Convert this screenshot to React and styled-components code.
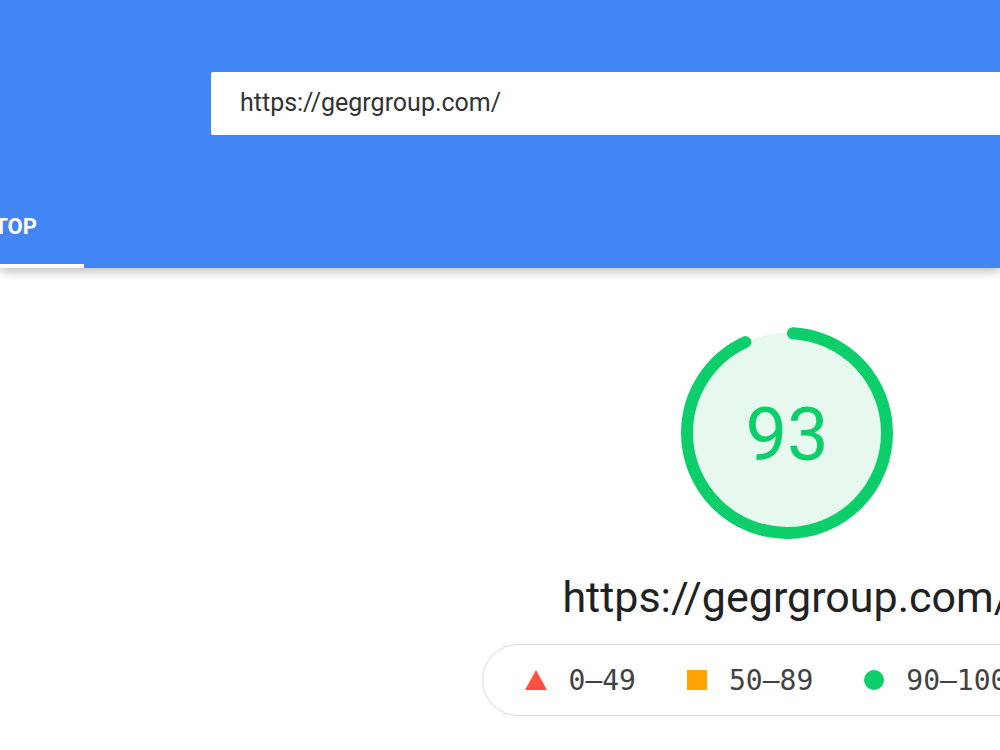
import React from 'react';
import styled, { createGlobalStyle } from 'styled-components';

const GlobalStyle = createGlobalStyle`
    html, body {
        margin: 0;
        padding: 0;
        background: #fff;
        overflow: hidden;
        width: 1000px;
        height: 750px;
        font-family: Roboto, "Liberation Sans", Arial, sans-serif;
    }
`;

const Page = styled.div`
    width: 1000px;
    height: 750px;
    overflow: hidden;
    position: relative;
`;

const Header = styled.header`
    background: #4285f4;
    height: 268px;
    display: flex;
    flex-direction: column;
    box-shadow: 0 3px 10px rgba(0, 0, 0, 0.28);
    position: relative;
    z-index: 1;
`;

const SearchRow = styled.div`
    display: flex;
    padding: 72px 0 0 211px;
`;

const UrlInput = styled.div`
    flex: 0 0 900px;
    height: 63px;
    background: #fff;
    border-radius: 2px;
    box-sizing: border-box;
    padding-left: 29px;
    padding-bottom: 2px;
    display: flex;
    align-items: center;
    font-size: 25px;
    color: #333;
`;

const Tabs = styled.nav`
    margin-top: auto;
    display: flex;
    margin-left: -100px;
`;

const Tab = styled.div`
    padding: 0 47px 0 40px;
    height: 72px;
    box-sizing: border-box;
    display: flex;
    align-items: center;
    padding-bottom: 8px;
    font-size: 22px;
    font-weight: 700;
    color: #fff;
    border-bottom: 4px solid ${p => (p.$active ? '#fff' : 'transparent')};
`;

const Main = styled.main`
    width: 800px;
    margin-left: 387px;
    display: flex;
    flex-direction: column;
    align-items: center;
    padding-top: 59px;
`;

const Gauge = styled.div`
    width: 212px;
    height: 212px;
    position: relative;
    display: flex;
    align-items: center;
    justify-content: center;
`;

const GaugeSvg = styled.svg`
    position: absolute;
    inset: 0;
    transform: rotate(-90deg);
`;

const Score = styled.span`
    position: relative;
    font-size: 74px;
    color: #0cce6b;
    margin-top: 2px;
`;

const FinalUrl = styled.div`
    margin-top: 33px;
    font-size: 43px;
    color: #212121;
    white-space: nowrap;
`;

const Legend = styled.div`
    margin-top: 22px;
    height: 72px;
    box-sizing: border-box;
    border: 1px solid #dadada;
    border-radius: 36px;
    padding: 0 84px 0 42px;
    display: flex;
    align-items: center;
    gap: 51px;
`;

const LegendItem = styled.div`
    display: flex;
    align-items: center;
    gap: 22px;
    font-family: "DejaVu Sans Mono", "Liberation Mono", monospace;
    font-size: 28px;
    color: #424242;
    white-space: nowrap;
`;

const Triangle = styled.span`
    width: 0;
    height: 0;
    border-left: 11px solid transparent;
    border-right: 11px solid transparent;
    border-bottom: 20px solid #ff4e42;
`;

const Square = styled.span`
    width: 20px;
    height: 20px;
    background: #ffa400;
`;

const Dot = styled.span`
    width: 20px;
    height: 20px;
    border-radius: 50%;
    background: #0cce6b;
`;

const score = 93;
const R = 100;
const C = 2 * Math.PI * R;

const App = () => (
    <Page>
        <GlobalStyle />
        <Header>
            <SearchRow>
                <UrlInput>https://gegrgroup.com/</UrlInput>
            </SearchRow>
            <Tabs>
                <Tab $active>DESKTOP</Tab>
            </Tabs>
        </Header>
        <Main>
            <Gauge>
                <GaugeSvg viewBox="0 0 212 212" width="212" height="212">
                    <circle cx="106" cy="106" r={R} fill="#e7f9ef" />
                    <circle
                        cx="106"
                        cy="106"
                        r={R}
                        fill="none"
                        stroke="#0cce6b"
                        strokeWidth="12"
                        strokeLinecap="round"
                        strokeDasharray={`${(score / 100) * C - 6} ${C}`}
                        strokeDashoffset="-6"
                    />
                </GaugeSvg>
                <Score>{score}</Score>
            </Gauge>
            <FinalUrl>https://gegrgroup.com/</FinalUrl>
            <Legend>
                <LegendItem><Triangle />0–49</LegendItem>
                <LegendItem><Square />50–89</LegendItem>
                <LegendItem><Dot />90–100</LegendItem>
            </Legend>
        </Main>
    </Page>
);

export default App;
